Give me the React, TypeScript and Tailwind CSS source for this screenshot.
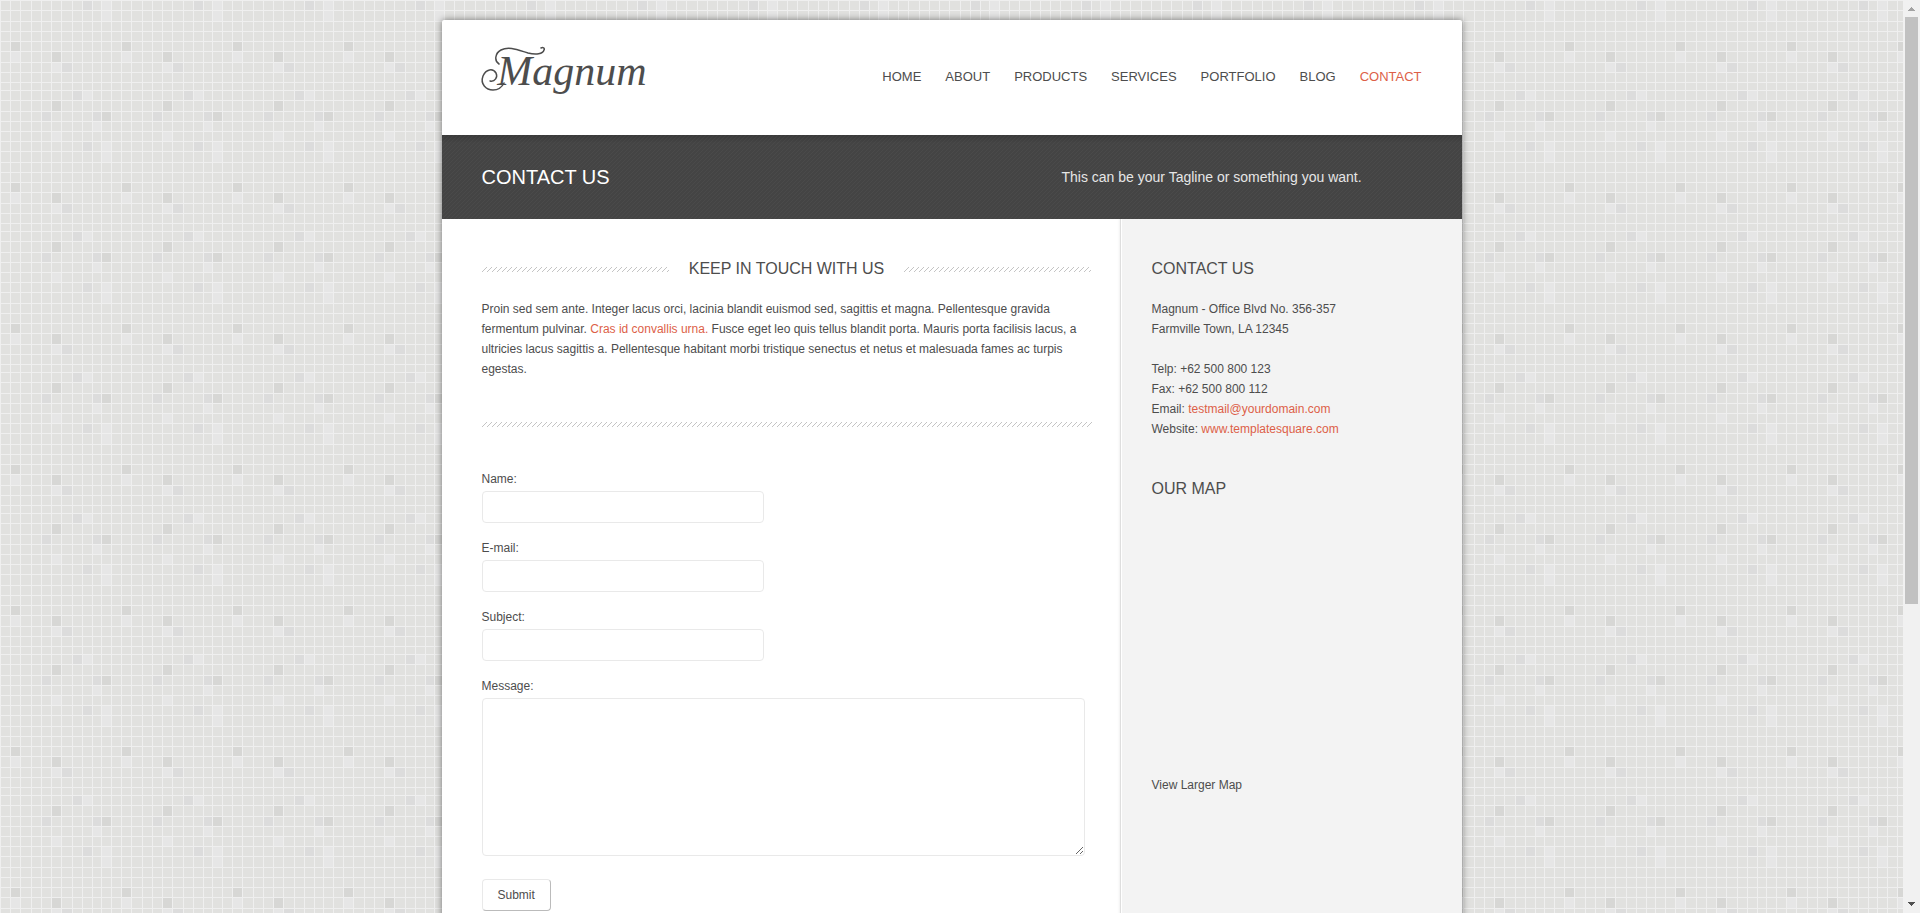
import { useId } from "react";

const DARK = "#d7d7d5";
const MID = "#dcdcdc";
const LIGHT = "#e6e6e6";

const COLS = [0, 10, 20, 31, 41, 51, 61, 72, 82, 92, 101, 111];
const ROWS = [0, 10, 21, 31, 41, 51, 62, 72, 82, 90, 100, 111, 121, 131, 141];

// column, row, colour of the tinted squares in one repeat of the mosaic
const CELLS: [number, number, string][] = [
  [8, 0, MID],
  [10, 0, LIGHT],
  [10, 1, LIGHT],
  [1, 4, DARK],
  [1, 5, LIGHT],
  [5, 5, DARK],
  [5, 6, LIGHT],
  [6, 6, MID],
  [7, 9, MID],
  [8, 9, LIGHT],
  [5, 10, DARK],
  [4, 11, MID],
  [9, 11, MID],
  [10, 11, DARK],
  [9, 12, LIGHT],
  [5, 13, LIGHT],
];

function Mosaic() {
  return (
    <svg className="absolute inset-0 h-full w-full" shapeRendering="crispEdges" aria-hidden="true">
      <defs>
        <pattern id="mosaic" width="111" height="141" patternUnits="userSpaceOnUse">
          <rect width="111" height="141" fill="#e1e1df" />
          {CELLS.map(([c, r, fill]) => (
            <rect
              key={`${c}-${r}`}
              x={COLS[c] + 1}
              y={ROWS[r] + 1}
              width={COLS[c + 1] - COLS[c] - 1}
              height={ROWS[r + 1] - ROWS[r] - 1}
              fill={fill}
            />
          ))}
          {COLS.slice(0, -1).map((x) => (
            <rect key={x} x={x} width="1" height="141" fill="#efefef" />
          ))}
          {ROWS.slice(0, -1).map((y) => (
            <rect key={y} y={y} width="111" height="1" fill="#efefef" />
          ))}
        </pattern>
      </defs>
      <rect width="100%" height="100%" fill="url(#mosaic)" />
    </svg>
  );
}

function Hatch({ className, color, step }: { className: string; color: string; step: number }) {
  const id = useId();
  return (
    <svg className={className} shapeRendering="crispEdges" aria-hidden="true">
      <defs>
        <pattern id={id} width={step} height={step} patternUnits="userSpaceOnUse">
          {Array.from({ length: step }, (_, y) => (
            <rect key={y} x={step - 1 - y} y={y} width="1" height="1" fill={color} />
          ))}
        </pattern>
      </defs>
      <rect width="100%" height="100%" fill={`url(#${id})`} />
    </svg>
  );
}

const NAV = ["Home", "About", "Products", "Services", "Portfolio", "Blog", "Contact"];

const FIELDS = [
  { id: "name", label: "Name:", type: "text" },
  { id: "email", label: "E-mail:", type: "email" },
  { id: "subject", label: "Subject:", type: "text" },
];

function Logo() {
  return (
    <a href="#" className="relative block w-[165px] text-right font-['Liberation_Serif',serif] text-[42px] leading-[50px] text-[#4d4d4d] italic">
      Magnum
      <svg
        className="absolute top-0 left-0 h-full w-full overflow-visible"
        viewBox="0 0 165 50"
        fill="none"
        stroke="#4d4d4d"
        strokeLinecap="round"
        aria-hidden="true"
      >
        <path d="M8 35c5 1 8-4 6-8C11 22 4 23 1 30c-3 8 3 14 10 14 5 0 9-3 11-7" strokeWidth="1.5" />
        <path d="M17 18C12 15 13 7 19 4c8-4 17 0 27 3 8 2 15 1 16-3 1-2-1-3-3-2" strokeWidth="1.5" />
      </svg>
    </a>
  );
}

function Header() {
  return (
    <header className="flex h-[115px] items-start justify-between px-10">
      <div className="pt-[26px]">
        <Logo />
      </div>
      <nav className="flex gap-6 pt-[47px] text-[13px] leading-5 uppercase">
        {NAV.map((item) => (
          <a key={item} href="#" className={item === "Contact" ? "text-[#dd5f48]" : "text-[#4d4d4d]"}>
            {item}
          </a>
        ))}
      </nav>
    </header>
  );
}

function Sidebar() {
  return (
    <aside className="w-[342px] shrink-0 border-l border-[#dedede] bg-[#f3f3f3] pt-10 pr-10 pl-[31px] shadow-[-1px_0_2px_rgba(0,0,0,0.06),inset_1px_0_0_#fff]">
      <h2 className="text-base leading-5">CONTACT US</h2>
      <p className="mt-5">
        Magnum - Office Blvd No. 356-357
        <br />
        Farmville Town, LA 12345
      </p>
      <p className="mt-5">
        Telp: +62 500 800 123
        <br />
        Fax: +62 500 800 112
        <br />
        Email: <a href="#" className="text-[#dd5f48]">testmail@yourdomain.com</a>
        <br />
        Website: <a href="#" className="text-[#dd5f48]">www.templatesquare.com</a>
      </p>
      <h2 className="mt-10 text-base leading-5">OUR MAP</h2>
      <div className="h-[276px]" />
      <a href="#">View Larger Map</a>
    </aside>
  );
}

function ContactForm() {
  return (
    <form className="mt-[42px]" onSubmit={(e) => e.preventDefault()}>
      {FIELDS.map((f) => (
        <div key={f.id} className="mb-[15px]">
          <label htmlFor={f.id} className="block">
            {f.label}
          </label>
          <input
            id={f.id}
            type={f.type}
            className="mt-[2px] block h-8 w-[282px] rounded border border-[#e9e9e9] bg-white px-2"
          />
        </div>
      ))}
      <label htmlFor="message" className="block">
        Message:
      </label>
      <textarea
        id="message"
        className="mt-[2px] block h-[158px] w-[603px] max-w-full resize rounded border border-[#e9e9e9] bg-white p-2"
      />
      <button
        type="submit"
        className="mt-[23px] h-8 rounded border border-t-[#e9e9e9] border-r-[#bbbbbb] border-b-[#bbbbbb] border-l-[#e9e9e9] bg-white px-[15px]"
      >
        Submit
      </button>
    </form>
  );
}

export default function App() {
  return (
    <div className="flex h-screen overflow-hidden font-['Liberation_Sans',Arial,sans-serif] text-xs leading-5 text-[#4d4d4d]">
      <div className="relative flex flex-1 justify-center overflow-hidden pt-5">
        <Mosaic />
        <div className="relative flex min-h-full w-full max-w-[1020px] shrink-0 flex-col self-start rounded-[2px] bg-white shadow-[0_0_7px_rgba(0,0,0,0.5)]">
          <Header />
          <div className="relative flex h-[84px] items-center justify-between bg-[#444444] px-10">
            <Hatch className="absolute inset-0 h-full w-full" color="#4a4a4a" step={4} />
            <div className="absolute inset-x-0 top-0 h-2 bg-linear-to-b from-black/15 to-transparent" />
            <h1 className="relative text-xl text-white">CONTACT US</h1>
            <p className="relative w-[360px] text-sm leading-5 text-[#e6e6e6]">
              This can be your Tagline or something you want.
            </p>
          </div>
          <div className="flex grow">
            <main className="min-w-0 flex-1 pt-10 pr-7 pb-10 pl-10">
              <div className="flex items-center gap-5">
                <Hatch className="h-[5px] min-w-0 flex-1" color="#c4c4c4" step={5} />
                <h2 className="text-base leading-5">KEEP IN TOUCH WITH US</h2>
                <Hatch className="h-[5px] min-w-0 flex-1" color="#c4c4c4" step={5} />
              </div>
              <p className="mt-5">
                Proin sed sem ante. Integer lacus orci, lacinia blandit euismod sed, sagittis et magna. Pellentesque
                gravida fermentum pulvinar. <a href="#" className="text-[#dd5f48]">Cras id convallis urna.</a> Fusce
                eget leo quis tellus blandit porta. Mauris porta facilisis lacus, a ultricies lacus sagittis a.
                Pellentesque habitant morbi tristique senectus et netus et malesuada fames ac turpis egestas.
              </p>
              <Hatch className="mt-[43px] block h-[5px] w-full" color="#c4c4c4" step={5} />
              <ContactForm />
            </main>
            <Sidebar />
          </div>
        </div>
      </div>
      <div className="flex w-[17px] shrink-0 flex-col items-center bg-[#f1f1f1]" aria-hidden="true">
        <svg className="h-[17px] w-[17px] shrink-0" viewBox="0 0 17 17" shapeRendering="crispEdges">
          <path d="M8 7h1v1h1v1h1v1h1v1H5v-1h1V9h1V8h1z" fill="#a3a3a3" />
        </svg>
        <div className="w-[13px] grow-[587] basis-0 bg-[#c1c1c1]" />
        <div className="grow-[292] basis-0" />
        <svg className="h-[17px] w-[17px] shrink-0" viewBox="0 0 17 17" shapeRendering="crispEdges">
          <path d="M5 6h7v1h-1v1h-1v1H9v1H8V9H7V8H6V7H5z" fill="#505050" />
        </svg>
      </div>
    </div>
  );
}
